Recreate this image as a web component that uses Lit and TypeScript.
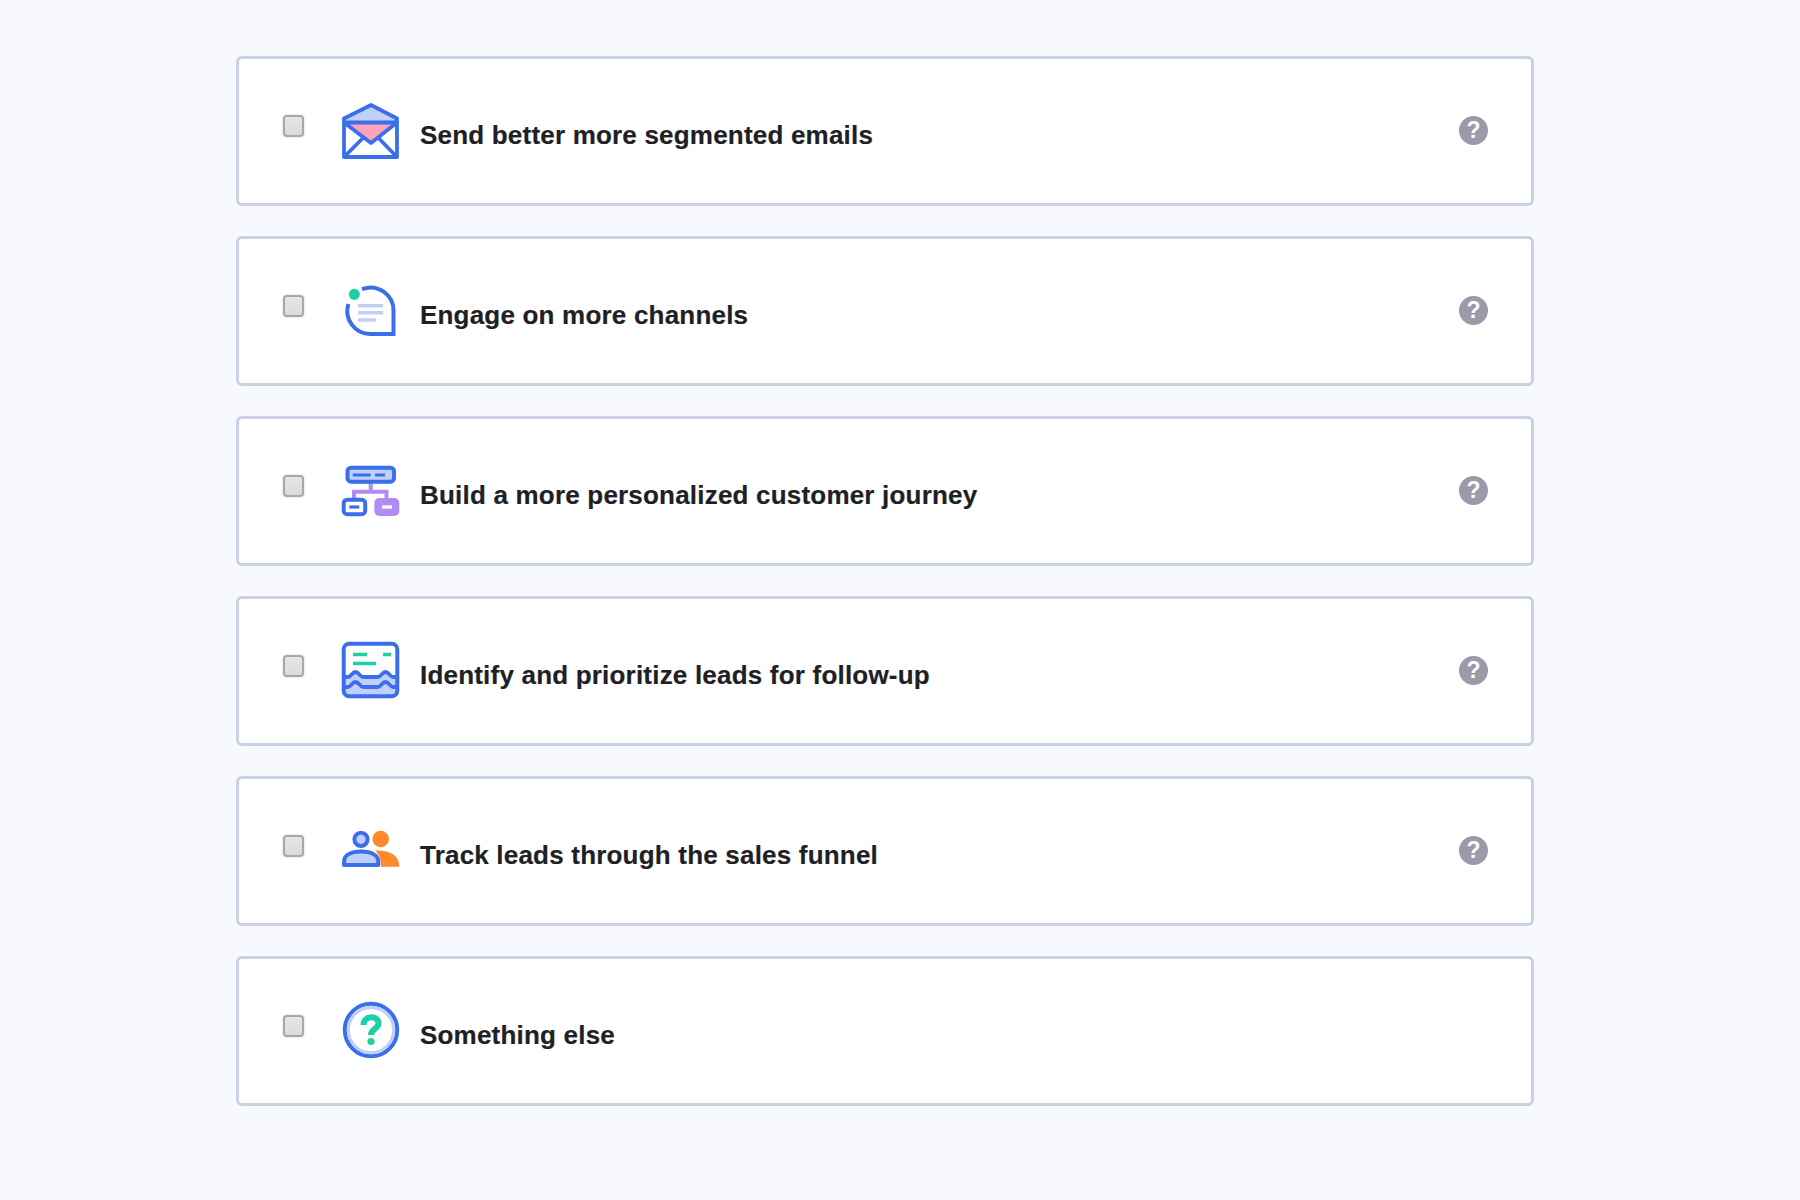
import { LitElement, html, css, svg } from "lit";
import { customElement } from "lit/decorators.js";

const B = "#3b6eea", L = "#c0d0f8", G = "#1ccfa5", P = "#b18cf5", O = "#ff8a2b", K = "#ffa3bb";
const wave = (y: number) =>
  `M3.7 ${y} H8 C11 ${y} 12 ${y - 5} 15.5 ${y - 5} C19 ${y - 5} 20 ${y} 23 ${y} H38 C41 ${y} 42 ${y - 5} 45.5 ${y - 5} C49 ${y - 5} 50 ${y} 53 ${y} H57.3`;

const icons = [
  svg`<path d="M31 4 L57 17.5 V22 H4 V17.5 Z" fill="${L}"/>
      <path d="M5 22 H56 L31 42 Z" fill="${K}"/>
      <path d="M31 4 L57 17.5 V56 H4 V17.5 Z M4 21.5 H57 M4 21.5 L31 42 L57 21.5 M4 56 L23 37 M57 56 L38.5 37" fill="none" stroke="${B}" stroke-width="3.8" stroke-linejoin="round" stroke-linecap="round"/>`,
  svg`<path d="M22 8.2 A23 23 0 0 1 53.5 30 V53 H30.5 A23 23 0 0 1 8.4 23" fill="none" stroke="${B}" stroke-width="4"/>
      <circle cx="14.3" cy="13.3" r="5.5" fill="${G}"/>
      <path d="M18 24.7 H43 M18 31.7 H43 M18 39 H36" stroke="${L}" stroke-width="3.5"/>`,
  svg`<path d="M30.7 22 V30.7 M14 37 V30.7 H46.5 V37" fill="none" stroke="${P}" stroke-width="4"/>
      <rect x="7.5" y="6.7" width="46.5" height="14" rx="3.5" fill="${L}" stroke="${B}" stroke-width="4"/>
      <path d="M12.7 14 H30.7 M35 14 H45" stroke="${B}" stroke-width="3.2"/>
      <rect x="3.7" y="38.7" width="21.5" height="14.5" rx="3.5" fill="#fff" stroke="${B}" stroke-width="4"/>
      <path d="M9.3 46 H19.3" stroke="${B}" stroke-width="3.2"/>
      <rect x="34.3" y="37" width="25" height="18" rx="5" fill="${P}"/>
      <path d="M42 46 H52" stroke="#fff" stroke-width="3.2"/>`,
  svg`<path d="${wave(36)} V51 Q57.3 55.3 53 55.3 H8 Q3.7 55.3 3.7 51 Z" fill="${L}"/>
      <rect x="3.7" y="2.7" width="53.6" height="52.6" rx="5.5" fill="none" stroke="${B}" stroke-width="4"/>
      <path d="${wave(36)} ${wave(46)}" fill="none" stroke="${B}" stroke-width="3.8"/>
      <path d="M13 13.5 H27 M43 13.5 H51 M13 22.5 H36" stroke="${G}" stroke-width="3.5"/>`,
  svg`<path d="M35 29.5 C50 29 59.3 34 59.3 45.7 H41 C41 38 39 33 35 29.5 Z" fill="${O}"/>
      <circle cx="40.7" cy="18" r="8.3" fill="${O}"/>
      <circle cx="21" cy="18.3" r="6.6" fill="${L}" stroke="${B}" stroke-width="4"/>
      <path d="M4 44 V41 C4 34 11 30.5 21 30.5 C31 30.5 38.3 34 38.3 41 V44 Z" fill="${L}" stroke="${B}" stroke-width="4" stroke-linejoin="round"/>`,
  svg`<circle cx="31" cy="29" r="26.2" fill="#fff" stroke="${B}" stroke-width="4"/>
      <circle cx="31" cy="29" r="22.7" fill="none" stroke="${L}" stroke-width="3.2"/>
      <path d="M23.5 24 C23.5 14 38.5 14 38.5 22.5 C38.5 28 31 27.5 31 34" fill="none" stroke="${G}" stroke-width="6"/>
      <circle cx="31" cy="40.5" r="3.6" fill="${G}"/>`,
];

const rows = [
  "Send better more segmented emails",
  "Engage on more channels",
  "Build a more personalized customer journey",
  "Identify and prioritize leads for follow-up",
  "Track leads through the sales funnel",
  "Something else",
];

@customElement("app-root")
export class AppRoot extends LitElement {
  static styles = css`
    :host {
      display: block;
      min-height: 1200px;
      background: #f8f9fe;
      font-family: "Liberation Sans", Arial, sans-serif;
    }
    .list {
      display: flex;
      flex-direction: column;
      gap: 30px;
      width: 1298px;
      box-sizing: border-box;
      margin-left: 236px;
      padding-top: 56px;
    }
    .card {
      display: flex;
      align-items: center;
      box-sizing: border-box;
      height: 150px;
      padding: 0 43px 0 44px;
      background: #fff;
      border: 3px solid #c9d1e2;
      border-radius: 6px;
    }
    .check {
      flex: none;
      align-self: flex-start;
      box-sizing: border-box;
      width: 21px;
      height: 22px;
      margin-top: 56px;
      background: linear-gradient(#e6e6e6, #dcdcdc);
      border: 2px solid #a8a8a8;
      border-radius: 4px;
      box-shadow: 0 0 2px rgba(0, 0, 0, 0.25);
    }
    .icon {
      flex: none;
      display: block;
      width: 60px;
      height: 60px;
      margin: 0 20px 0 36px;
    }
    .label {
      flex: 1;
      padding-top: 8px;
      font-size: 26px;
      font-weight: 700;
      letter-spacing: 0.2px;
      -webkit-text-stroke: 0.2px #1f1f26;
      color: #1f1f26;
    }
    .help {
      flex: none;
      width: 29px;
      height: 29px;
      margin-bottom: 2px;
      border-radius: 50%;
      background: #9a9aa9;
      color: #fff;
      font-size: 23px;
      font-weight: 700;
      line-height: 29px;
      text-align: center;
    }
  `;

  render() {
    return html`<div class="list">
      ${rows.map(
        (r, i) => html`<div class="card">
          <div class="check"></div>
          <svg class="icon" viewBox="0 0 60 60">${icons[i]}</svg>
          <div class="label">${r}</div>
          ${i < 5 ? html`<div class="help">?</div>` : ""}
        </div>`
      )}
    </div>`;
  }
}
